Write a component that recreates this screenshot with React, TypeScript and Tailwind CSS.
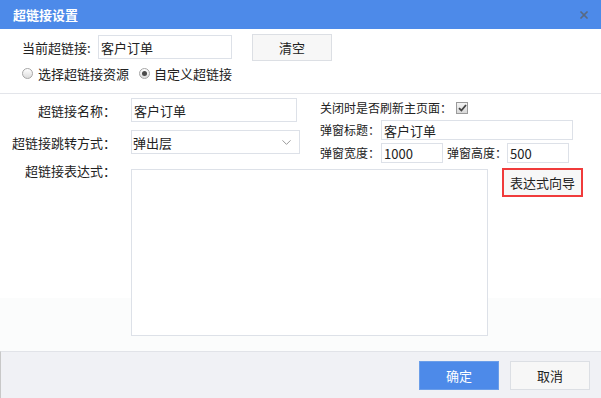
import { X, ChevronDown } from 'lucide-react';

function Radio({ checked }: { checked?: boolean }) {
  return (
    <span className="w-[11px] h-[11px] rounded-full border border-[#a6a6a6] bg-[linear-gradient(to_bottom,#ffffff,#dcdcdc)] flex items-center justify-center shrink-0">
      {checked && <span className="w-[5px] h-[5px] rounded-full bg-[#4a4a4a]" />}
    </span>
  );
}

function Field({ value, className }: { value: string; className: string }) {
  return (
    <div className={`border border-[#dde1e8] bg-white flex items-center pl-[2px] text-[13px] ${className}`}>
      {value}
    </div>
  );
}

export default function App() {
  return (
    <div className="w-[601px] h-[398px] flex flex-col text-[#222] font-['Noto_Sans_CJK_SC','Microsoft_YaHei',sans-serif] leading-none overflow-hidden">
      {/* title bar */}
      <div className="h-[29px] bg-[#4d8ae9] flex items-center justify-between pl-[13px] pr-[11px] shrink-0">
        <span className="text-white text-[13px] font-bold">超链接设置</span>
        <X size={12} strokeWidth={3.5} className="text-[#5a6a83]" />
      </div>

      <div className="flex-1 flex flex-col bg-[linear-gradient(to_bottom,#ffffff_269px,#fbfcfc_269px)]">
        {/* current link */}
        <div className="h-[65px] pl-[22px] pt-[5px] border-b border-[#e3e5ea] shrink-0">
          <div className="flex items-center h-[26px]">
            <span className="w-[76px] text-[13px]">当前超链接:</span>
            <Field value="客户订单" className="w-[134px] h-[24px]" />
            <button className="ml-[20px] w-[80px] h-[27px] border border-[#dcdfe4] bg-[#f7f7f7] text-[13px]">清空</button>
          </div>
          <div className="flex items-center h-[20px] mt-[3px] text-[13px]">
            <Radio />
            <span className="ml-[5px]">选择超链接资源</span>
            <span className="ml-[10px]"><Radio checked /></span>
            <span className="ml-[4px]">自定义超链接</span>
          </div>
        </div>

        {/* settings */}
        <div className="pt-[4px] flex flex-col">
          <div className="flex">
            <div className="w-[300px] flex flex-col text-[13px]">
              <div className="flex items-center h-[24px]">
                <span className="w-[116px] text-right">超链接名称：</span>
                <Field value="客户订单" className="ml-[15px] w-[166px] h-[24px]" />
              </div>
              <div className="flex items-center h-[24px] mt-[8px]">
                <span className="w-[116px] text-right">超链接跳转方式：</span>
                <div className="ml-[15px] w-[169px] h-[24px] border border-[#dde1e8] flex items-center justify-between pl-[1px] pr-[5px]">
                  <span>弹出层</span>
                  <ChevronDown size={15} strokeWidth={1.2} className="text-[#777]" />
                </div>
              </div>
            </div>
            <div className="ml-[20px] flex flex-col text-[12px]">
              <div className="flex items-center h-[17px] mt-[1px]">
                <span>关闭时是否刷新主页面：</span>
                <span className="ml-[4px] w-[12px] h-[12px] border border-[#9a9a9a] bg-[linear-gradient(to_bottom,#f4f4f4,#d8d8d8)] flex items-center justify-center">
                  <svg width="9" height="8" viewBox="0 0 9 8">
                    <path d="M1 4.2 L3.4 6.5 L8 1" fill="none" stroke="#444" strokeWidth="1.8" />
                  </svg>
                </span>
              </div>
              <div className="flex items-center h-[20px] mt-[4px]">
                <span className="w-[61px]">弹窗标题：</span>
                <Field value="客户订单" className="w-[192px] h-[20px]" />
              </div>
              <div className="flex items-center h-[20px] mt-[3px]">
                <span className="w-[61px]">弹窗宽度：</span>
                <Field value="1000" className="w-[62px] h-[20px]" />
                <span className="ml-[4px] w-[60px]">弹窗高度：</span>
                <Field value="500" className="w-[62px] h-[20px]" />
              </div>
            </div>
          </div>

          <div className="flex items-start mt-[6px]">
            <span className="w-[116px] text-right text-[13px] -mt-[5px]">超链接表达式：</span>
            <div className="ml-[15px] w-[357px] h-[167px] border border-[#dde1e8] bg-white" />
            <button className="ml-[14px] -mt-[1px] w-[81px] h-[29px] border-2 border-[#f03b3b] bg-[#f7f7f7] text-[13px]">表达式向导</button>
          </div>
        </div>
      </div>

      {/* footer */}
      <div className="h-[47px] shrink-0 border-t border-[#e1e3e8] border-l border-l-[#c8c8c8] bg-[#f0f1f5] flex items-center justify-end gap-[11px] pr-[11px]">
        <button className="w-[80px] h-[29px] bg-[#4d8ae9] border border-[#6b9ee9] text-white text-[13px]">确定</button>
        <button className="w-[80px] h-[29px] bg-[#f7f7f7] border border-[#dcdfe4] text-[13px]">取消</button>
      </div>
    </div>
  );
}
